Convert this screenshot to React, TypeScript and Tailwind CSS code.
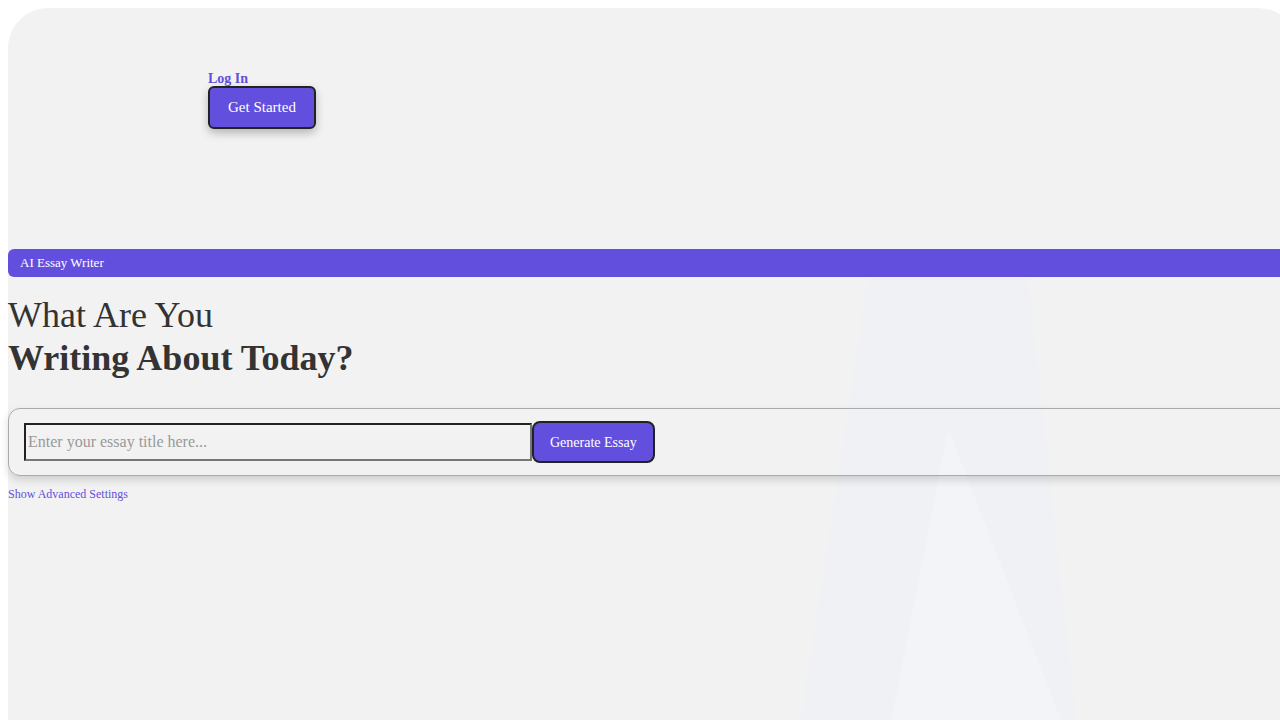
export default function App() {
  return (
    <div className="h-[720px] w-full overflow-hidden bg-white" style={{ fontFamily: '"Liberation Serif", "Times New Roman", serif' }}>
      <div className="relative ml-2 mt-2 min-h-[780px] w-[1290px] rounded-[40px] bg-[#f2f2f2] pt-[62px] text-[#333]">
        {/* faint decorative beams */}
        <svg className="pointer-events-none absolute left-[780px] top-[270px]" width="360" height="460" viewBox="0 0 360 460">
          <polygon points="80,0 240,0 290,460 10,460" fill="#eef2f8" opacity="0.35" />
          <polygon points="160,150 100,460 280,460" fill="#f6f8fb" opacity="0.45" />
        </svg>

        <header className="relative pl-[200px]">
          <a className="block pt-[1px] text-[14px] font-bold leading-[15px] text-[#634fdd]">Log In</a>
          <button className="rounded-[6px] border-2 border-[#222] bg-[#634fdd] px-[18px] py-[11px] text-[15px] leading-[17px] text-white shadow-[0_4px_8px_rgba(0,0,0,0.25)]">
            Get Started
          </button>
        </header>

        <section className="relative mt-[120px]">
          <div className="flex h-[28px] items-center rounded-l-[6px] bg-[#634fdd] px-3 text-[13px] text-white">AI Essay Writer</div>

          <h1 className="mt-[17px] text-[36px] leading-[1.2]">
            <span className="block font-normal">What Are You</span>
            <span className="block font-bold">Writing About Today?</span>
          </h1>

          <div className="mt-[28px] flex items-center rounded-[12px] border border-[#aaa] px-[15px] py-3 shadow-[0_4px_8px_rgba(0,0,0,0.15)]">
            <input
              placeholder="Enter your essay title here..."
              className="h-[38px] w-[508px] border-2 border-t-[#222] border-l-[#222] border-b-[#767676] border-r-[#767676] bg-transparent px-[2px] text-[16px] placeholder:text-[#999]"
            />
            <button className="h-[42px] rounded-[8px] border-2 border-[#222] bg-[#634fdd] px-4 text-[14px] text-white">
              Generate Essay
            </button>
          </div>

          <a className="mt-[11px] block text-[12px] leading-[14px] text-[#634fdd]">Show Advanced Settings</a>
        </section>
      </div>
    </div>
  );
}
